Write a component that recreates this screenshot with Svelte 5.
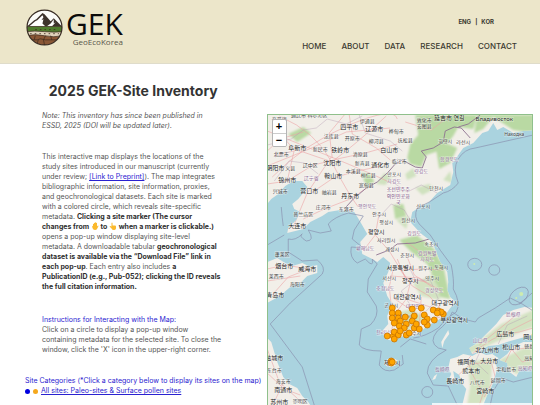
<script lang="ts">
  type Label = [x: number, y: number, text: string, kind?: string];

  const navItems = ['HOME', 'ABOUT', 'DATA', 'RESEARCH', 'CONTACT'];

  const labels: Label[] = [
    [309, 117, '通辽市 科尔沁区'],
    [279, 121, '奈曼旗'],
    [349, 129, '四平市', 'city'],
    [367, 123, '伊通县'],
    [374, 131, '辽源市', 'city'],
    [396, 133, '桦甸市'],
    [331, 138, '法库县'],
    [352, 140, '开原市'],
    [376, 143, '柳河县'],
    [297, 150, '阜新市', 'city'],
    [320, 151, '新民市'],
    [340, 152, '铁岭市', 'city'],
    [389, 152, '白山市', 'city'],
    [281, 156, '北票市'],
    [360, 156, '清原县'],
    [332, 165, '沈阳市', 'city'],
    [310, 167, '辽中区'],
    [362, 165, '新宾县'],
    [380, 167, '通化市', 'city'],
    [399, 163, '临江市'],
    [275, 170, '朝阳市', 'city'],
    [290, 170, '义县'],
    [353, 173, '本溪县'],
    [333, 178, '鞍山市', 'city'],
    [368, 177, '桓仁县'],
    [287, 182, '锦州市', 'city'],
    [311, 180, '辽宁省', 'region'],
    [394, 176, '만포시'],
    [394, 183, '자강도', 'region'],
    [366, 187, '宽甸县'],
    [280, 193, '兴城市'],
    [309, 193, '营口市', 'city'],
    [329, 194, '岫岩县'],
    [350, 198, '丹东市', 'city'],
    [424, 122, '敦化市'],
    [424, 128, '安图县'],
    [449, 120, '延吉市 연길', 'city'],
    [445, 143, '회령시'],
    [463, 144, '라선시'],
    [405, 142, '抚松县'],
    [494, 121, 'Владивосток', 'city'],
    [514, 136, 'Находка'],
    [449, 161, '함경북도', 'region'],
    [421, 173, '량강도', 'region'],
    [398, 191, '조선민주주', 'country'],
    [398, 198, '의인민공화', 'country'],
    [398, 204, '국', 'country'],
    [436, 190, '단천시'],
    [423, 208, '신포시'],
    [323, 209, '庄河市'],
    [346, 211, '东港市'],
    [367, 208, '평안북도', 'region'],
    [303, 216, '普兰店区'],
    [297, 228, '大连市', 'city'],
    [379, 216, '안주시'],
    [386, 224, '평성시'],
    [376, 234, '평양시', 'city'],
    [386, 242, '사리원시'],
    [365, 250, '황해남도', 'region'],
    [392, 251, '개성시'],
    [408, 222, '원산시'],
    [414, 235, '강원도', 'region'],
    [431, 246, '속초시'],
    [427, 255, '강원특별', 'region'],
    [427, 261, '자치도', 'region'],
    [407, 257, '춘천시'],
    [400, 270, '서울특별시', 'city'],
    [425, 270, '원주시'],
    [441, 269, '동해시'],
    [410, 283, '청주시', 'city'],
    [432, 280, '영주시'],
    [389, 280, '서산시'],
    [385, 290, '충청남도', 'region'],
    [434, 292, '경상북도', 'region'],
    [407, 299, '대전광역시', 'city'],
    [445, 305, '대구광역시', 'city'],
    [391, 307, '군산시'],
    [415, 308, '대한민국', 'country'],
    [400, 318, '광주광역시'],
    [385, 334, '전라남도', 'region'],
    [282, 256, '蓬莱区'],
    [284, 268, '烟台市', 'city'],
    [307, 271, '威海市', 'city'],
    [276, 278, '莱西市'],
    [297, 286, '海阳市'],
    [275, 297, '青岛市', 'city'],
    [454, 322, '부산광역시', 'city'],
    [414, 335, '여수시'],
    [392, 365, '제주시', 'city'],
    [513, 316, '島根県', 'region'],
    [505, 336, '広島市', 'city'],
    [480, 342, '山口県', 'region'],
    [511, 349, '松山市', 'city'],
    [529, 339, '岡山', 'city'],
    [529, 348, '徳島'],
    [487, 352, '北九州市', 'city'],
    [466, 364, '福岡市', 'city'],
    [489, 363, '大分市', 'city'],
    [529, 360, '高知'],
    [525, 370, '高知県', 'region'],
    [442, 371, '長崎県', 'region'],
    [471, 373, '熊本市', 'city'],
    [506, 371, '宇和島市'],
    [455, 383, '長崎市', 'city'],
    [477, 384, '八代市'],
    [498, 382, '延岡市'],
    [485, 393, '宮崎市', 'city'],
    [274, 360, '盐城市', 'city'],
    [274, 372, '东台市'],
    [283, 383, '海安市'],
    [283, 392, '南通市', 'city'],
    [300, 403, '崇明区'],
    [279, 404, '苏州市', 'city'],
  ];

  const sites = [
    [392, 308], [392, 313], [398, 313], [392, 318], [398, 318], [412, 309],
    [405, 317], [414, 316], [421, 308], [424, 315], [412, 321], [400, 321],
    [394, 323], [406, 324], [399, 326], [404, 328], [387, 336], [393, 336],
    [394, 332], [398, 335], [394, 339], [400, 331], [406, 335], [409, 333],
    [414, 328], [419, 329], [416, 324], [427, 325], [427, 319], [424, 322],
    [434, 320], [433, 310], [438, 311], [443, 314], [441, 312], [437, 313],
    [391, 361], [391, 363], [392, 362],
  ];
</script>

<div class="page">
  <header>
    <a class="brand" href="#home" aria-label="GEK GeoEcoKorea">
      <svg class="emblem" viewBox="0 0 36 36" aria-hidden="true">
        <defs>
          <clipPath id="disc"><circle cx="18" cy="18" r="17" /></clipPath>
        </defs>
        <g clip-path="url(#disc)">
          <path fill="#fbfbf8" d="M0 0h36v18H0z" />
          <path fill="#3d322b" d="M1 17 8 11l2-1 6-6 2 1 6 7 3-3 8 8z" />
          <path fill="#fff" d="m3 17 6-5 2-1 5-5 1 2-2 3 2-1-1 4 3 3zM20 17l4-3 3-4v4l2-1-4 4z" />
          <path fill="#4f7b2d" d="M0 17h36v6H0z" />
          <path fill="#dfd2bb" d="M0 22q8-1 18 0t18 0v5H0z" />
          <path fill="#8a5735" d="M0 26q9-2 18 0t18 0v10H0z" />
          <path
            fill="none"
            stroke="#3e2b1e"
            stroke-width=".7"
            d="M0 17h36M0 22q8-1 18 0t18 0M0 26q9-2 18 0t18 0M2 30h9l3-1 5 1h14M9 26l-1 4m11-4-2 4 1 5m6-9 1 4m-13 0-1 3"
          />
          <path
            stroke="#3e2b1e"
            stroke-width=".8"
            stroke-dasharray="1.5 3"
            d="M4 24h28M9 20h22"
          />
        </g>
        <circle cx="18" cy="18" r="17" fill="none" stroke="#372b23" stroke-width="1.2" />
      </svg>
      <span class="wordmark">
        <span class="short">GEK</span>
        <span class="long">GeoEcoKorea</span>
      </span>
    </a>
    <div class="menus">
      <div class="langs">
        <a href="#eng">ENG</a><span>|</span><a href="#kor">KOR</a>
      </div>
      <nav>
        {#each navItems as item}
          <a href="#{item.toLowerCase()}">{item}</a>
        {/each}
      </nav>
    </div>
  </header>

  <main>
    <section class="info">
      <h1>2025 GEK-Site Inventory</h1>
      <p class="note">
        Note: This inventory has since been published in<br />
        ESSD, 2025 (DOI will be updated later).
      </p>
      <p class="intro">
        This interactive map displays the locations of the<br />
        study sites introduced in our manuscript (currently<br />
        under review; <a href="#preprint">[Link to Preprint]</a>). The map integrates<br />
        bibliographic information, site information, proxies,<br />
        and geochronological datasets. Each site is marked<br />
        with a colored circle, which reveals site-specific<br />
        metadata. <b>Clicking a site marker (The cursor</b><br />
        <b>
          changes from
          <svg class="hand" viewBox="0 0 16 16" role="img" aria-label="open hand">
            <path
              fill="#fbb92c"
              d="M4 9V4q1-1 2 0V2q1-1 2 0V1q1-1 2 0v1q1-1 2 0v7l2-2q1 0 1 1l-3 6q-1 2-4 2-4 0-5-4L2 8q0-1 2 1z"
            />
          </svg>
          to
          <svg class="hand" viewBox="0 0 16 16" role="img" aria-label="pointing hand">
            <path
              fill="#fbb92c"
              d="M5 9V2q1-2 2 0v5h5q2 0 2 2v4q-1 3-4 3-4 0-5-3L1 9q1-2 4 0z"
            />
          </svg>
          when a marker is clickable.)
        </b><br />
        opens a pop-up window displaying site-level<br />
        metadata. A downloadable tabular <b>geochronological</b><br />
        <b>dataset is available via the “Download File” link in</b><br />
        <b>each pop-up</b>. Each entry also includes <b>a</b><br />
        <b>PublicationID (e.g., Pub-052); clicking the ID reveals</b><br />
        <b>the full citation information.</b>
      </p>
      <p class="howto">
        <span class="lead">Instructions for Interacting with the Map:</span><br />
        Click on a circle to display a pop-up window<br />
        containing metadata for the selected site. To close the<br />
        window, click the 'X' icon in the upper-right corner.
      </p>
      <div class="categories">
        <div class="lead">Site Categories (*Click a category below to display its sites on the map)</div>
        <div class="category">
          <i class="dot blue"></i><i class="dot orange"></i>
          <a href="#all">All sites: Paleo-sites &amp; Surface pollen sites</a>
        </div>
      </div>
    </section>

    <section class="map">
      <svg class="tiles" viewBox="267 115 266 290" preserveAspectRatio="xMidYMin slice">
        <defs>
          <path
            id="mainland"
            d="M267 115H533V130L523 131 513 133 503 127 497 130 493 123 488 131 482 133 473 143 469 145 463 148 458 155 452 163 453 172 450 185 437 193 428 203 421 206 412 212 410 222 420 233 432 242 440 262 447 272 448 282 447 290 450 297 455 302 450 308 445 315 438 320 427 326 421 331 414 336 407 335 400 337 393 341 385 339 382 331 388 324 387 316 390 308 392 304 387 296 383 283 388 272 390 263 383 257 377 262 372 259 362 254 360 242 367 234 363 227 359 220 354 212 340 210 328 212 322 216 310 222 303 229 287 233 288 228 296 220 300 212 294 209 292 204 298 199 303 193 307 187 302 181 293 181 285 186 278 194 271 199 267 204Z"
          />
          <path
            id="islands"
            d="M267 262 277 258 285 263 292 266 302 263 310 267 317 265 317 273 307 276 300 283 290 287 283 293 276 298 267 303ZM267 338 271 342 277 362 283 377 289 384 297 388 302 396 308 402 310 405H267ZM533 308 524 307 513 310 503 315 496 324 490 330 482 338 477 343 469 348 472 354 478 352 488 346 498 345 510 341 521 338 533 335ZM450 359 457 357 463 354 472 356 479 352 486 355 492 354 498 358 495 363 497 368 495 376 492 385 487 395 483 405H462L464 397 466 389 462 384 459 375 453 371 455 384 448 381 451 374 448 368ZM499 360 507 354 512 347 523 342 533 342V371L525 367 519 371 516 377 508 371 507 363ZM384 364Q386 357 395 359 401 362 394 366 387 368 384 364ZM448 330 449 334 444 341 442 348 441 342 445 335ZM434 376 437 374 435 379 432 380Z"
          />
          <clipPath id="land">
            <use href="#mainland" />
            <use href="#islands" />
          </clipPath>
          <filter id="soft"><feGaussianBlur stdDeviation="1.2" /></filter>
        </defs>
        <path fill="#aad3df" d="M267 115h266v290H267z" />
        <g fill="#f2efe9">
          <use href="#mainland" />
          <use href="#islands" />
        </g>
        <g clip-path="url(#land)">
          <g class="forest" filter="url(#soft)">
            <path
              d="M415 115h62l-4 14-15-2-5 9-8 10-10 6-9 3-5 12-11-3-3-6 3-14 8-9zM477 115h56v18l-20-3-20-13-10 12-9 4zM436 150l12-6 9 4-7 15-11 6zM399 240l17-5 18 14 9 19 2 22-9-6-9-20-16-12zM432 262l10-1 8 38-10-2zM288 134l15-7 8 6-14 9zM361 172l10 3 3 7-8 5zM393 205l10-1 3 12-11 3z"
            />
            <path d="M455 352l20-8 26-20 32-14v17l-35 14-27 12zM467 362l25-4-2 34-10 12h-13l3-18zM499 360l33-16v22l-16 8zM388 361h9v4h-9zM413 284l20-10 11 12-5 14-18-4z" opacity=".55" />
            <path d="M384 173l8 4-7 8-9-1zM415 188l14-4 5 5-12 6zM405 174l8-6 3 8-9 4zM409 216l-13 4 10 9zM443 180l7-9 2 12zM391 315l20-6 15 9-20 13z" opacity=".6" />
          </g>
          <g class="roads">
            <path
              d="M267 131Q292 141 331 157T391 183M272 177Q304 144 349 125T397 119M279 116Q316 132 332 163T358 207M267 166 309 149 346 132 390 128M331 157Q317 178 307 193L292 229M332 162 297 150 274 156M332 160 365 153 397 144M332 158 329 133 344 115M334 160Q357 143 386 116M311 193 333 178 353 172 381 166M267 184 287 181 313 165 330 161M276 129 294 150 287 181M303 219 324 209 350 199 371 185M349 115 352 134 376 148 390 160M405 122 431 130 449 116M267 151 280 139 303 132"
            />
            <path
              d="M375 235 389 251 400 269 410 283 406 299 397 311 391 331M400 270 425 269 442 270M400 270 412 286 429 296 445 314M406 299 427 306 447 313M394 332 413 324 440 317M393 269 389 287 391 306M379 213 375 235 365 248M390 276 419 278 441 291M407 257 414 275 432 287M406 242 427 257M397 259 405 278 426 282M393 298 417 314M421 297 419 326M267 269 284 265 310 269M271 296 288 277 306 270M267 281 300 276M267 349 279 382 300 401M267 373 284 389 300 395M273 404 284 381"
            />
            <path d="M467 360 476 350 491 340 507 332 533 319M467 360 473 376 483 393 479 405M455 378 470 364 491 362M491 362 495 377 484 397M503 366 511 350 533 347M512 350 522 362 533 359M479 345 499 329 516 315M499 335 519 332 533 328" />
          </g>
          <path
            class="frontier"
            d="M344 209 353 199 366 188 377 182 388 172 395 164 402 160 415 167 422 168 426 157 421 151 433 148 443 142 445 131 454 127 461 128 470 138M376 255 389 250 397 244 415 243 429 239M458 127 468 124 480 115"
          />
          <path
            class="frontier thin"
            d="M267 145 291 139 303 130 316 128 327 119 346 124 362 116M274 181 289 161 304 163 318 174M359 115 365 133 390 141 402 151M395 184 407 192 421 185 437 193M378 218 391 204 404 210 411 222M394 270 408 265 415 280 401 291 410 305M415 280 430 280 438 299 421 316M481 349 475 362 488 374M498 344 507 325 527 316"
          />
        </g>
        <path
          class="sea-line"
          d="M533 135 475 148Q464 149 458 159T458 183Q452 191 443 193 429 203 417 208 413 217 419 224L430 235Q440 251 451 265 454 280 453 289 461 303 456 312 446 317 438 328 424 337 413 338"
        />
        <path
          class="sea-line"
          d="M363 216 354 230 352 239 363 248 351 247Q349 258 357 263L365 259Q374 269 372 259L377 264 368 279 367 292 376 306Q379 316 370 325L361 329 359 345Q363 351 381 351 380 359 379 365 384 373 394 370L403 364 402 355"
        />
        <path
          class="sea-line"
          d="M363 216 348 213Q334 217 328 224L331 231 320 233 308 230Q315 241 306 241 298 236 302 234 295 241 288 239V252L302 261 317 260Q326 267 322 274L290 303 270 324 302 367 314 405M267 245 284 235M281 207Q282 219 283 226"
        />
        <path
          class="sea-line"
          d="M533 311 522 304 510 298 495 308 478 318 475 322 463 319 452 312Q448 323 437 331 428 342 438 348L446 350Q427 360 427 373L433 385 448 386 457 405M400 347 410 339 426 344M533 377 513 382 501 378 493 391 490 405M519 304 533 292"
        />
        <g class="sea-line">
          <ellipse cx="474.5" cy="264.5" rx="7" ry="6.2" />
          <ellipse cx="494" cy="270" rx="5.5" ry="5.2" />
          <ellipse cx="518.5" cy="296" rx="7" ry="11" transform="rotate(50 518.5 296)" />
          <circle cx="427" cy="392" r="5.5" />
        </g>
        <g fill="#cdebb0">
          <circle cx="474" cy="264" r="1" />
          <circle cx="521" cy="294" r="2" />
          <circle cx="516" cy="298" r="1" />
        </g>
        {#each labels as [x, y, text, kind]}
          <text {x} {y} class={kind}>{text}</text>
        {/each}
        {#each sites as [cx, cy]}
          <circle class="site" {cx} {cy} r="3" />
        {/each}
      </svg>
      <div class="zoom">
        <button aria-label="Zoom in">+</button>
        <button aria-label="Zoom out">−</button>
      </div>
      <div class="attribution"></div>
    </section>
  </main>
</div>

<style>
  :global(body) {
    margin: 0;
    background: #fff;
  }
  .page {
    height: 100vh;
    display: flex;
    flex-direction: column;
    overflow: hidden;
    font-family: Inter, 'Noto Sans', sans-serif;
    font-size: 7px;
    line-height: 10px;
    color: #555;
  }
  header {
    display: flex;
    justify-content: space-between;
    padding: 9px 23px 8px 26px;
    min-height: 46px;
    background: #ece6ca;
    border-bottom: 1px solid #dfdcca;
  }
  .brand {
    display: flex;
    gap: 3px;
    align-items: flex-start;
    color: #0b0b0b;
    text-decoration: none;
    font-family: 'Open Sans', 'Noto Sans', sans-serif;
  }
  .emblem {
    width: 37px;
    height: 37px;
  }
  .wordmark {
    display: flex;
    flex-direction: column;
    align-items: flex-end;
  }
  .short {
    font-size: 30px;
    line-height: 29px;
  }
  .long {
    font-size: 8px;
    line-height: 8px;
    color: #5a574b;
  }
  .menus {
    display: flex;
    flex-direction: column;
    align-items: flex-end;
    gap: 14px;
    padding-top: 8px;
  }
  .menus a {
    color: #3b3a30;
    text-decoration: none;
  }
  .langs {
    display: flex;
    gap: 4px;
    margin-right: 23px;
    font-size: 6px;
    font-weight: 700;
    color: #3b3a30;
  }
  nav {
    display: flex;
    gap: 15px;
    font-size: 8px;
    font-weight: 500;
  }
  main {
    flex: 1;
    min-height: 0;
    display: grid;
    grid-template-columns: minmax(0, 1fr) minmax(0, 1fr);
    grid-template-rows: minmax(0, 1fr);
    padding-right: 7px;
  }
  .info {
    padding-left: 42px;
    white-space: nowrap;
  }
  h1 {
    margin: 17px 42px 10px 0;
    font-size: 14px;
    line-height: 20px;
    text-align: center;
    color: #333;
  }
  p {
    margin: 0;
  }
  b {
    color: #2f2f2f;
  }
  a {
    color: #2a22d0;
  }
  .note {
    margin-bottom: 21px;
    font-style: italic;
  }
  .intro {
    margin-bottom: 23px;
  }
  .howto {
    margin-bottom: 21px;
  }
  .lead {
    color: #2a22d0;
  }
  .hand {
    width: 8px;
    height: 8px;
    vertical-align: -1px;
  }
  .categories {
    margin-left: -17px;
  }
  .category {
    display: flex;
    align-items: center;
    gap: 3px;
  }
  .dot {
    width: 5px;
    height: 5px;
    border-radius: 50%;
  }
  .blue {
    background: #0000e0;
  }
  .orange {
    background: #f5a81c;
  }
  .map {
    margin-top: 50px;
    position: relative;
    border: 1px solid #8fc08b;
    border-bottom: 0;
    overflow: hidden;
    background: #aad3df;
  }
  .tiles {
    display: block;
    width: 100%;
    height: 100%;
  }
  .forest {
    fill: #b9d9a3;
  }
  .roads {
    fill: none;
    stroke: #eda5a6;
    stroke-width: 0.6;
  }
  .frontier {
    fill: none;
    stroke: #8d7390;
    stroke-width: 0.9;
  }
  .thin {
    stroke-width: 0.4;
    stroke: #b39bb3;
  }
  .sea-line {
    fill: none;
    stroke: #8992b0;
    stroke-width: 0.7;
  }
  text {
    font-family: 'Noto Sans', 'Noto Sans CJK SC', 'Noto Sans CJK KR', sans-serif;
    font-size: 5px;
    text-anchor: middle;
    fill: #444;
    stroke: #fff;
    stroke-width: 1px;
    stroke-opacity: 0.5;
    paint-order: stroke;
  }
  .city {
    font-size: 6px;
    fill: #222;
  }
  .region {
    fill: #92709a;
  }
  .country {
    fill: #7a5085;
  }
  .site {
    fill: #ffa500;
    stroke: #c87400;
    stroke-width: 0.8;
  }
  .zoom {
    position: absolute;
    left: 4px;
    top: 4px;
    display: flex;
    flex-direction: column;
    border: 1px solid #b5b5b5;
    border-radius: 2px;
    overflow: hidden;
  }
  .zoom button {
    width: 13px;
    height: 13px;
    padding: 0;
    border: 0;
    background: #fff;
    font: 700 11px/13px 'Liberation Sans', sans-serif;
    color: #000;
    cursor: pointer;
  }
  .zoom button + button {
    border-top: 1px solid #ccc;
  }
  .attribution {
    position: absolute;
    right: 0;
    bottom: 0;
    width: 38%;
    height: 2px;
    background: rgba(255, 255, 255, 0.8);
  }
</style>
